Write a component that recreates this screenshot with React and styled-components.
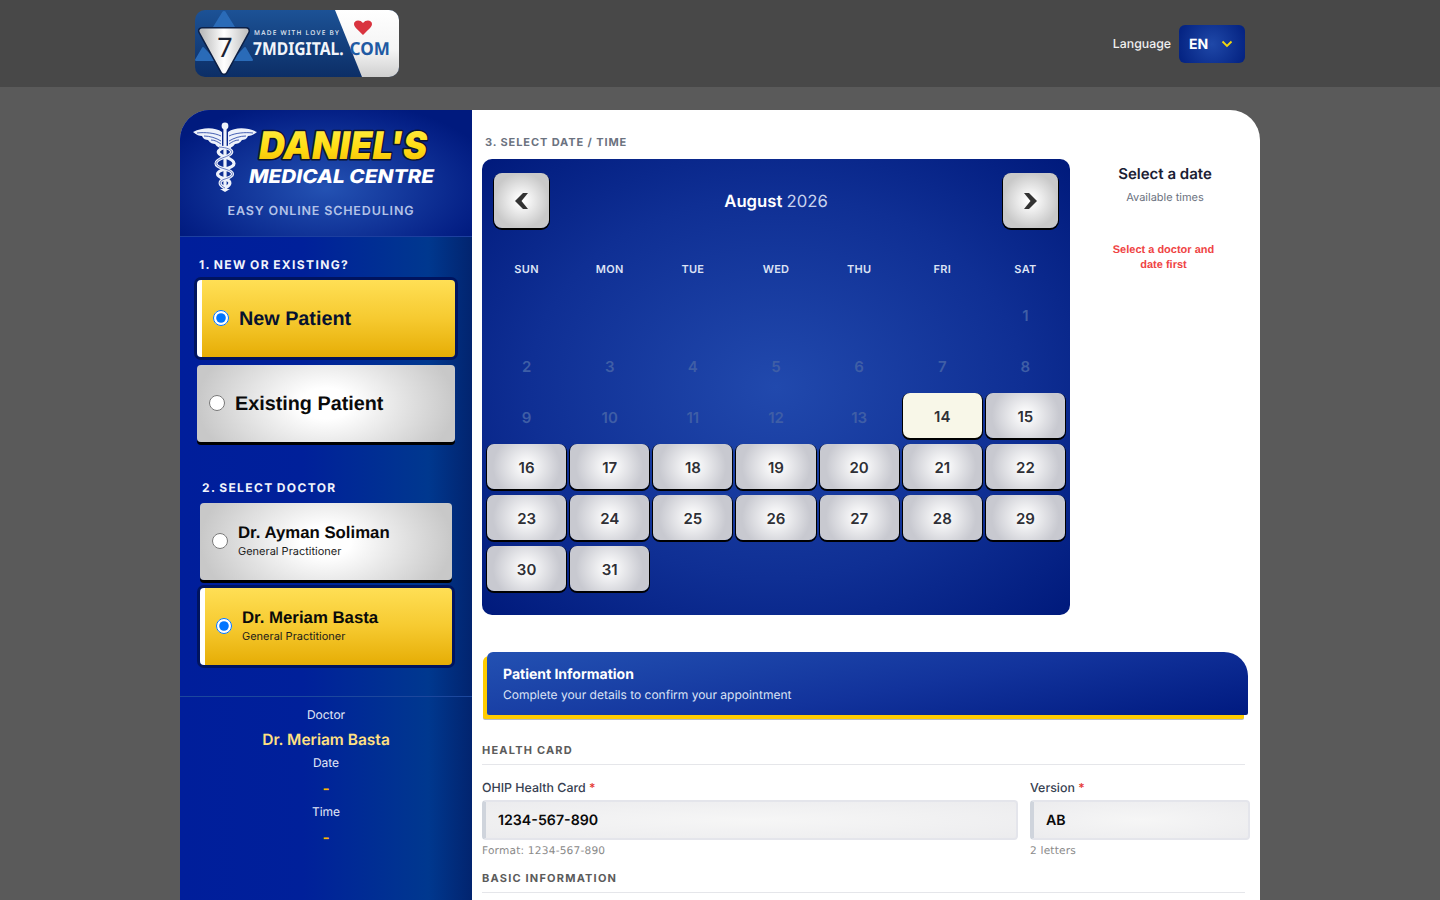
import React from 'react'
import styled, { createGlobalStyle } from 'styled-components'

const GlobalStyle = createGlobalStyle`
  html, body {
    margin: 0;
    height: 900px;
    overflow: hidden;
    background: #5a5a5a;
    font-family: Inter, "Liberation Sans", sans-serif;
    text-rendering: geometricPrecision;
  }
  * { box-sizing: border-box; }
`;

const TopBar = styled.header`
  height: 87px;
  background: #484848;
  padding: 10px 195px 0;
  display: flex;
  justify-content: space-between;
`;

const Brand = styled.svg`
  display: block;
  width: 204px;
  height: 67px;
  border-radius: 10px;
`;

const LangBox = styled.div`
  display: flex;
  align-items: center;
  gap: 8px;
  height: 38px;
  margin-top: 15px;
  color: #f0f0f0;
  font-size: 12.3px;
  font-weight: 500;
`;

const LangLabel = styled.span`
  margin-bottom: 2px;
`;

const LangSelect = styled.div`
  width: 66px;
  height: 38px;
  border-radius: 6px;
  background: radial-gradient(circle at center, #1f48a8, #02207f);
  color: #fff;
  font-size: 14px;
  font-weight: 700;
  display: flex;
  align-items: center;
  justify-content: space-between;
  padding: 0 12px 0 10px;
`;

const Shell = styled.div`
  display: flex;
  width: 1080px;
  height: 790px;
  margin: 23px auto 0;
  border-radius: 30px 30px 0 0;
  overflow: hidden;
  background: #fff;
`;

const Sidebar = styled.aside`
  width: 292px;
  flex: none;
  background: linear-gradient(90deg, #001e9b 0%, #00209a 42%, #00388f 85%, #02246f 100%);
`;

const SideHead = styled.div`
  height: 127px;
  padding-top: 10px;
  background: radial-gradient(ellipse 60% 70% at 50% 62%, #2452b3, #052187 85%, #001a7e);
  border-bottom: 1px solid #1d3f9f;
  text-align: center;
`;

const DanielsLogo = styled.svg`
  display: block;
  width: 292px;
  height: 76px;
`;

const Tagline = styled.div`
  margin: 8px 10px 0 0;
  color: #b4c3e8;
  font-size: 12.5px;
  font-weight: 600;
  letter-spacing: .84px;
  line-height: 16px;
`;

const SideSection = styled.section`
  padding: ${p => p.$top}px ${p => p.$inset}px ${p => p.$bottom}px;
`;

const SideTitle = styled.h3`
  margin: 0 0 8px ${p => p.$shift}px;
  color: #f1f4fc;
  font-size: 12px;
  line-height: 15px;
  font-weight: 700;
  letter-spacing: 1.38px;
  word-spacing: -1px;
`;

const Choice = styled.label`
  display: flex;
  align-items: center;
  gap: 10px;
  height: 77px;
  margin-bottom: 8px;
  padding-left: ${p => (p.$active ? 11 : 12)}px;
  border-radius: 4px;
  border-left: ${p => (p.$active ? '5px solid #fff' : '0')};
  color: ${p => (p.$active ? '#07122f' : '#0a0a0a')};
  background: ${p => (p.$active
    ? 'linear-gradient(180deg, #ffdf55 0%, #f6ca30 50%, #e6ad05 100%)'
    : 'radial-gradient(ellipse 50% 100% at center, #ffffff 20%, #c8c8c8 100%)')};
  box-shadow: ${p => (p.$active ? '0 0 0 3px #00145f' : '0 3px 0 #000')};
  font-family: "Liberation Sans", Arial, sans-serif;
  font-weight: 700;
  font-size: 19.8px;
  &:last-child { margin-bottom: 0; }
`;

const Radio = styled.input.attrs({ type: 'radio' })`
  width: 16px;
  height: 16px;
  margin: -1px 0 0;
  flex: none;
  accent-color: #0075ff;
`;

const KindLabel = styled.span`
  padding-top: 2px;
`;

const DocName = styled.div`
  font-size: 16.8px;
  line-height: 20px;
  color: #0a0a0a;
`;

const DocRole = styled.div`
  margin: 1px 0 2px;
  font-family: Inter, sans-serif;
  font-size: 11px;
  line-height: 14px;
  font-weight: 400;
  color: #1a1a1a;
`;

const Summary = styled.div`
  border-top: 1px solid #1c479d;
  padding-top: 10px;
  text-align: center;
`;

const SumLabel = styled.div`
  color: #e4e9f7;
  font-size: 12px;
  line-height: 15px;
`;

const SumValue = styled.div`
  color: ${p => (p.$dash ? '#ffb800' : '#ffe082')};
  font-size: 15.5px;
  font-weight: 600;
  line-height: 20px;
  margin: ${p => (p.$dash ? '9px 0 3px' : '8px 0 5px')};
  height: ${p => (p.$dash ? 22 : 20)}px;
`;

const Main = styled.main`
  flex: 1;
  min-width: 0;
  padding-top: 25px;
`;

const Schedule = styled.div`
  display: grid;
  grid-template-columns: 588px 1fr;
  padding-left: 10px;
`;

const StepTitle = styled.h3`
  grid-column: 1 / -1;
  margin: 0 0 9px 3px;
  color: #6b7280;
  font-size: 11px;
  line-height: 15px;
  font-weight: 700;
  letter-spacing: .9px;
`;

const Calendar = styled.div`
  height: 456px;
  border-radius: 10px;
  padding: 14px 5px 0;
  background: radial-gradient(ellipse 70% 70% at 50% 50%, #2149ad 0%, #0f2f94 60%, #001a7c 100%);
`;

const CalHead = styled.div`
  display: flex;
  align-items: center;
  justify-content: space-between;
  padding: 0 7px;
  margin-bottom: 34px;
`;

const NavBtn = styled.div`
  width: 55px;
  height: 55px;
  border-radius: 8px;
  background: radial-gradient(circle closest-side at center, #fff 10%, #c9c9c9 100%);
  box-shadow: 0 1px 0 1px #000;
  display: flex;
  align-items: center;
  justify-content: center;
`;

const Month = styled.div`
  padding-top: 2px;
  color: #fff;
  font-size: 16.7px;
  font-weight: 600;
  span { font-weight: 400; color: #c9d3ee; }
`;

const DayNames = styled.div`
  display: grid;
  grid-template-columns: repeat(7, 1fr);
  gap: 4px;
  margin-bottom: 15px;
  color: #dde3f5;
  font-size: 11px;
  line-height: 14px;
  font-weight: 600;
  letter-spacing: .3px;
  text-align: center;
`;

const Days = styled.div`
  display: grid;
  grid-template-columns: repeat(7, 1fr);
  grid-auto-rows: 45px;
  gap: 6px 4px;
`;

const Day = styled.div`
  display: flex;
  align-items: center;
  justify-content: center;
  padding-top: 1px;
  font-size: 15px;
  font-weight: 600;
  border-radius: 7px;
  color: #2f3036;
  background: ${p => (p.$today
    ? '#f8f7e8'
    : 'radial-gradient(ellipse 50% 85% at center, #fff 5%, #c8c9d0 85%)')};
  box-shadow: 0 1px 0 1px #000;
  ${p => p.$off && `
    padding-top: 3px;
    background: none;
    box-shadow: none;
    color: #3f5ea6;
  `}
`;

const Times = styled.div`
  padding-top: 5px;
  text-align: center;
`;

const TimesTitle = styled.div`
  color: #1a2033;
  font-size: 15px;
  line-height: 20px;
  font-weight: 600;
`;

const TimesSub = styled.div`
  margin-top: 6px;
  color: #6b7280;
  font-size: 11px;
  line-height: 14px;
`;

const TimesWarn = styled.div`
  margin: 39px 43px 0 40px;
  color: #ef4444;
  font-family: "Liberation Sans", Arial, sans-serif;
  font-size: 11px;
  line-height: 15px;
  font-weight: 700;
`;

const Form = styled.div`
  padding: 37px 10px 0;
`;

const Banner = styled.div`
  height: 63px;
  width: 761px;
  margin-left: 5px;
  padding: 14px 16px 0;
  border-radius: 6px 24px 2px 2px;
  background: linear-gradient(170deg, #2351b2 0%, #12339c 55%, #001a80 100%);
  box-shadow: -4px 4px 0 #ffcc00, -4px 5px 0 #b9bcc4;
`;

const BannerTitle = styled.div`
  color: #fff;
  font-size: 14px;
  line-height: 18px;
  font-weight: 700;
`;

const BannerSub = styled.div`
  margin-top: 3px;
  color: #dbe3f6;
  font-size: 12px;
  line-height: 16px;
`;

const GroupTitle = styled.h4`
  margin: ${p => p.$top}px 5px ${p => p.$after}px 0;
  padding-bottom: 7px;
  border-bottom: 1px solid #e5e6ea;
  color: #5b5b5b;
  font-size: 11px;
  line-height: 14px;
  font-weight: 700;
  letter-spacing: 1.2px;
`;

const Fields = styled.div`
  display: grid;
  grid-template-columns: 536px 220px;
  column-gap: 12px;
`;

const Field = styled.div``;

const FieldLabel = styled.div`
  color: #374151;
  font-size: 12.4px;
  line-height: 16px;
  font-weight: 500;
  margin-bottom: 4px;
  span { color: #e53935; }
`;

const FieldBox = styled.div`
  height: 40px;
  display: flex;
  align-items: center;
  padding-left: 12px;
  border: 2px solid #e4e5eb;
  border-left: 4px solid #cfd4dc;
  border-radius: 4px;
  background: radial-gradient(ellipse at center, #f6f6f6, #ececee);
  color: #0a0a0a;
  font-size: 14.2px;
  font-weight: 600;
`;

const Hint = styled.div`
  margin-top: 5px;
  color: #8a8a8a;
  font-family: "DejaVu Sans", sans-serif;
  font-size: 10.6px;
  line-height: 13px;
  letter-spacing: .2px;
`;

const week = ['SUN', 'MON', 'TUE', 'WED', 'THU', 'FRI', 'SAT'];
const dates = Array.from({ length: 31 }, (_, i) => i + 1);

const WING = 'M-3 9 C-10 4 -22 4 -32 9 C-28 12 -26 13 -23 13 C-22 16 -19 17 -17 17 C-15 20 -12 21 -10 21 C-8 24 -5 25 -3 25 Z';
const WING_LINES = 'M-28 10 C-20 9 -10 10 -4 13 M-21 13 C-15 13 -9 15 -4 18 M-14 17 C-10 17 -7 19 -4 21';
const SNAKE = 'M-6 24 C8 25 11 30 0 34 C-12 38 -12 43 0 46 C10 49 10 53 0 56 C-7 58 -6 62 0 65';

function Caduceus() {
  return (
    <g transform="translate(45 3)">
      <path d={WING} fill="#eef2fb" />
      <path d={WING_LINES} fill="none" stroke="#1a3aa0" strokeWidth=".8" />
      <g transform="scale(-1 1)">
        <path d={WING} fill="#eef2fb" />
        <path d={WING_LINES} fill="none" stroke="#1a3aa0" strokeWidth=".8" />
      </g>
      <circle cx="0" cy="3" r="3.4" fill="#eef2fb" />
      <rect x="-1.6" y="3" width="3.2" height="63" fill="#eef2fb" />
      <path d="M-5 66 H5 L0 69 Z" fill="#eef2fb" />
      <path d={SNAKE} fill="none" stroke="#eef2fb" strokeWidth="3.2" />
      <path d={SNAKE} transform="scale(-1 1)" fill="none" stroke="#eef2fb" strokeWidth="3.2" />
      <path d={SNAKE} fill="none" stroke="#12309c" strokeWidth=".6" />
    </g>
  );
}

function App() {
  return (
    <>
      <GlobalStyle />
      <TopBar>
        <Brand viewBox="0 0 204 67">
          <defs>
            <linearGradient id="brandBg" x1="0" y1="0" x2="0" y2="1">
              <stop offset="0" stopColor="#1c5296" />
              <stop offset="1" stopColor="#0c2e66" />
            </linearGradient>
            <linearGradient id="brandWhite" x1="0" y1="0" x2="0" y2="1">
              <stop offset="0" stopColor="#ffffff" />
              <stop offset="0.6" stopColor="#f4f4f4" />
              <stop offset="1" stopColor="#cfcfcf" />
            </linearGradient>
            <linearGradient id="brandTri" x1="0" y1="0" x2="1" y2="0">
              <stop offset="0" stopColor="#bdbdbd" />
              <stop offset="0.5" stopColor="#ffffff" />
              <stop offset="1" stopColor="#c4c4c4" />
            </linearGradient>
          </defs>
          <rect width="204" height="67" fill="url(#brandBg)" />
          <path d="M140 0 H204 V67 H167 Z" fill="url(#brandWhite)" />
          <path d="M29 3 L42 24 H16 Z" fill="#2a6bb8" stroke="#2a6bb8" strokeWidth="4" strokeLinejoin="round" />
          <path d="M8 38 L1 50 H19 Z M50 38 L57 50 H39 Z" fill="#2a6bb8" stroke="#2a6bb8" strokeWidth="2" strokeLinejoin="round" />
          <path d="M7 21 H51 L29 61 Z" fill="#0c1f45" stroke="#0c1f45" strokeWidth="8" strokeLinejoin="round" />
          <path d="M7 21 H51 L29 61 Z" fill="url(#brandTri)" stroke="url(#brandTri)" strokeWidth="5" strokeLinejoin="round" />
          <text x="30" y="47" textAnchor="middle" fontFamily="'Noto Sans', sans-serif" fontSize="27" fill="#1a2233">7</text>
          <text x="59" y="24.5" fontFamily="'Noto Sans', sans-serif" fontWeight="500" fontSize="6.5" letterSpacing="1.1" fill="#e9eef7" textLength="86">MADE WITH LOVE BY</text>
          <text transform="translate(58 45) scale(.87 1)" fontFamily="'Noto Sans', sans-serif" fontWeight="700" fontSize="18" fill="#f2f5fa">7MDIGITAL.</text>
          <text transform="translate(154.5 45) scale(.95 1)" fontFamily="'Noto Sans', sans-serif" fontWeight="700" fontSize="18" fill="#1f5aa3">COM</text>
          <path d="M168 25 C163 20 159 17 159 14 C159 10 165 9 168 13 C171 9 177 10 177 14 C177 17 173 20 168 25 Z" fill="#d9343f" />
        </Brand>
        <LangBox>
          <LangLabel>Language</LangLabel>
          <LangSelect>
            EN
            <svg width="12" height="8" viewBox="0 0 12 8">
              <path d="M1.5 1.5 L6 6 L10.5 1.5" fill="none" stroke="#f5d90a" strokeWidth="1.8" />
            </svg>
          </LangSelect>
        </LangBox>
      </TopBar>

      <Shell>
        <Sidebar>
          <SideHead>
            <DanielsLogo viewBox="0 0 292 76">
              <defs>
                <linearGradient id="danielsFill" x1="0" y1="0" x2="0" y2="1">
                  <stop offset="0" stopColor="#fff04a" />
                  <stop offset="0.55" stopColor="#ffdc12" />
                  <stop offset="1" stopColor="#f2b705" />
                </linearGradient>
              </defs>
              <Caduceus />
              <text
                x="79" y="39" fontFamily="Inter, 'Liberation Sans', sans-serif" fontWeight="900" fontStyle="italic"
                fontSize="38" fill="url(#danielsFill)" stroke="#0b1330" strokeWidth="3" strokeLinejoin="round" paintOrder="stroke"
                textLength="168" lengthAdjust="spacingAndGlyphs"
              >DANIEL'S</text>
              <text
                x="69" y="63" fontFamily="Inter, 'Liberation Sans', sans-serif" fontWeight="800" fontStyle="italic"
                fontSize="19" fill="#ffffff" textLength="185" lengthAdjust="spacingAndGlyphs"
              >MEDICAL CENTRE</text>
            </DanielsLogo>
            <Tagline>EASY ONLINE SCHEDULING</Tagline>
          </SideHead>

          <SideSection $top={20} $inset={17} $bottom={38}>
            <SideTitle $shift={2}>1. NEW OR EXISTING?</SideTitle>
            <Choice $active>
              <Radio name="kind" defaultChecked />
              <KindLabel>New Patient</KindLabel>
            </Choice>
            <Choice>
              <Radio name="kind" />
              <KindLabel>Existing Patient</KindLabel>
            </Choice>
          </SideSection>

          <SideSection $top={0} $inset={20} $bottom={31}>
            <SideTitle $shift={2}>2. SELECT DOCTOR</SideTitle>
            <Choice>
              <Radio name="doctor" />
              <div>
                <DocName>Dr. Ayman Soliman</DocName>
                <DocRole>General Practitioner</DocRole>
              </div>
            </Choice>
            <Choice $active>
              <Radio name="doctor" defaultChecked />
              <div>
                <DocName>Dr. Meriam Basta</DocName>
                <DocRole>General Practitioner</DocRole>
              </div>
            </Choice>
          </SideSection>

          <Summary>
            <SumLabel>Doctor</SumLabel>
            <SumValue>Dr. Meriam Basta</SumValue>
            <SumLabel>Date</SumLabel>
            <SumValue $dash>-</SumValue>
            <SumLabel>Time</SumLabel>
            <SumValue $dash>-</SumValue>
          </Summary>
        </Sidebar>

        <Main>
          <Schedule>
            <StepTitle>3. SELECT DATE / TIME</StepTitle>
            <Calendar>
              <CalHead>
                <NavBtn>
                  <svg width="13" height="16" viewBox="0 0 13 16">
                    <path d="M8 0 H13 L6.5 8 L13 16 H8 L0 8 Z" fill="#333" />
                  </svg>
                </NavBtn>
                <Month>August <span>2026</span></Month>
                <NavBtn>
                  <svg width="13" height="16" viewBox="0 0 13 16">
                    <path d="M5 0 H0 L6.5 8 L0 16 H5 L13 8 Z" fill="#333" />
                  </svg>
                </NavBtn>
              </CalHead>
              <DayNames>
                {week.map(d => <div key={d}>{d}</div>)}
              </DayNames>
              <Days>
                {Array.from({ length: 6 }, (_, i) => <Day key={i} $off />)}
                {dates.map(d => (
                  <Day key={d} $off={d < 14} $today={d === 14}>{d}</Day>
                ))}
              </Days>
            </Calendar>
            <Times>
              <TimesTitle>Select a date</TimesTitle>
              <TimesSub>Available times</TimesSub>
              <TimesWarn>Select a doctor and date first</TimesWarn>
            </Times>
          </Schedule>

          <Form>
            <Banner>
              <BannerTitle>Patient Information</BannerTitle>
              <BannerSub>Complete your details to confirm your appointment</BannerSub>
            </Banner>
            <GroupTitle $top={28} $after={15}>HEALTH CARD</GroupTitle>
            <Fields>
              <Field>
                <FieldLabel>OHIP Health Card <span>*</span></FieldLabel>
                <FieldBox>1234-567-890</FieldBox>
                <Hint>Format: 1234-567-890</Hint>
              </Field>
              <Field>
                <FieldLabel>Version <span>*</span></FieldLabel>
                <FieldBox>AB</FieldBox>
                <Hint>2 letters</Hint>
              </Field>
            </Fields>
            <GroupTitle $top={13} $after={0}>BASIC INFORMATION</GroupTitle>
          </Form>
        </Main>
      </Shell>
    </>
  );
}

export default App;
